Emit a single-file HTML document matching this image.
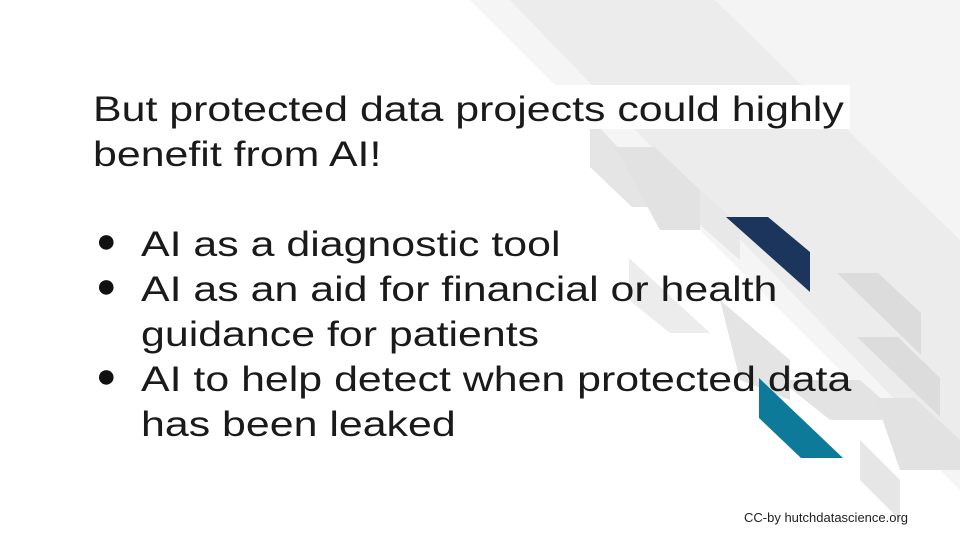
<!DOCTYPE html>
<html><head><meta charset="utf-8"><style>
body{margin:0;width:960px;height:540px;overflow:hidden;background:#fff;position:relative;font-family:"Liberation Sans",sans-serif}
svg{position:absolute;left:0;top:0}
.t{position:absolute;left:93px;color:#1a1a1a;font-size:35px;line-height:45px;white-space:nowrap;transform:scaleX(1.225);transform-origin:0 0}
.hl{position:absolute;left:90px;top:85px;width:760px;height:44px;background:#fff}
.b{position:absolute;left:96px;font-size:34px;color:#111}
.f{position:absolute;left:744px;top:510px;font-size:13px;color:#222}
</style></head><body>
<svg width="960" height="540">
<polygon points="470,0 960,0 960,540 1010,540" fill="#f5f5f5"/>
<polygon points="510,0 715,0 960,240 960,540 1030,540" fill="#ececec"/>
<polygon points="715,0 960,0 960,240" fill="#f4f4f4"/>
<polygon points="590,128 600,128 673,207 632,207 590,167" fill="#e5e5e5"/>
<polygon points="615,147 655,147 700,190 700,230 660,230" fill="#e2e2e2"/>
<polygon points="700,190 740,225 740,260 700,225" fill="#e8e8e8"/>
<polygon points="629,258 690,315 690,330 629,300" fill="#e6e6e6"/>
<polygon points="629,258 629,300 670,333 710,333" fill="#ececec"/>
<polygon points="720,300 790,360 790,400 740,380" fill="#e4e4e4"/>
<polygon points="837,273 878,273 921,313 921,355" fill="#dcdcdc"/>
<polygon points="857,337 898,337 940,378 940,417" fill="#dcdcdc"/>
<polygon points="780,380 860,380 905,420 830,420" fill="#e3e3e3"/>
<polygon points="875,398 915,398 960,440 960,470 900,470" fill="#e2e2e2"/>
<polygon points="860,440 900,480 900,520 860,480" fill="#e6e6e6"/>
<polygon points="726,217 768,217 810,252 810,292" fill="#1b355c"/>
<polygon points="759,378 843,458 801,458 759,418" fill="#0e7a9a"/>
</svg>
<div class="hl"></div>
<div class="t" style="top:87px">But protected data projects could highly</div>
<div class="t" style="top:132px">benefit from AI!</div>
<div class="b" style="top:222px">●</div><div class="t" style="left:141px;top:222px">AI as a diagnostic tool</div>
<div class="b" style="top:267px">●</div><div class="t" style="left:141px;top:267px">AI as an aid for financial or health</div>
<div class="t" style="left:141px;top:312px">guidance for patients</div>
<div class="b" style="top:357px">●</div><div class="t" style="left:141px;top:357px">AI to help detect when protected data</div>
<div class="t" style="left:141px;top:402px">has been leaked</div>
<div class="f">CC-by hutchdatascience.org</div>
</body></html>
